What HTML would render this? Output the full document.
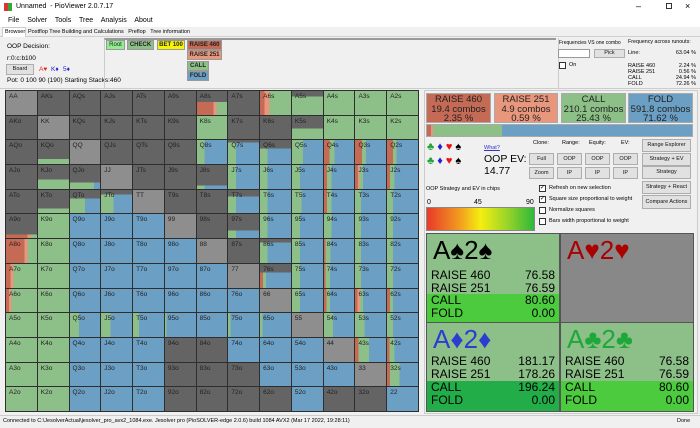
<!DOCTYPE html>
<html><head><meta charset="utf-8">
<style>
*{box-sizing:border-box;margin:0;padding:0;white-space:nowrap}
body{width:700px;height:428px;overflow:hidden;background:#f0f0f0;font-family:"Liberation Sans",sans-serif;font-size:6.5px;color:#000;position:relative}
.a{position:absolute}
:root{--R:#c46a55;--S:#e8967c;--G:#8dbf88;--B:#6b9fc4;--D:#646464}
#grid{position:absolute;left:5px;top:90px;width:414px;height:322px;background:#2e2e2e;border:1px solid #2e2e2e;display:grid;grid-template-columns:repeat(13,1fr);grid-template-rows:repeat(13,1fr);gap:1px}
#grid div{font-size:6.5px;color:#222;padding:2px 0 0 3px;overflow:hidden}
.d{background:var(--D)}.p{background:#8e8e8e}.g{background:var(--G)}.b{background:var(--B)}
.btn{position:absolute;background:#e1e1e1;border:1px solid #adadad;font-size:5.5px;text-align:center;color:#111;overflow:hidden}
.act{position:absolute;font-size:9.5px;text-align:center;line-height:9.5px;padding-top:1px;color:#222;border:1px solid #aaa}
.node{position:absolute;font-size:6px;font-weight:bold;text-align:center;line-height:8px;border:1px solid #999;color:#222;overflow:hidden}
.q{position:absolute;width:134px;height:90px;border:1px solid #555}
.q .c{position:absolute;left:6px;top:1px;font-size:26px;line-height:30px}
.q .r{position:absolute;left:0;width:132px;height:13px;font-size:12px;line-height:13px;padding:0 4px}
.q .r span{float:right}
.cb{position:absolute;width:7px;height:7px;border:1px solid #333;background:#fff;font-size:6px;line-height:5px;text-align:center}
.s{font-size:5.5px}
</style></head><body>
<div class="a" style="left:0;top:0;width:700px;height:14px;background:#fff"></div>
<div class="a" style="left:4px;top:3px;width:8px;height:8px;background:linear-gradient(90deg,#d33 50%,#3a3 0)"></div>
<div class="a" style="left:16px;top:3px;font-size:7px">Unnamed&nbsp; - PioViewer 2.0.7.17</div>
<div class="a" style="left:636px;top:1px;font-size:9px">–</div>
<div class="a" style="left:666px;top:3px;width:6px;height:6px;border:1px solid #333"></div>
<div class="a" style="left:685px;top:1px;font-size:9px">×</div>
<div class="a" style="left:0;top:14px;width:700px;height:13px;background:#fff"></div>
<div class="a" style="left:8px;top:17px;font-size:7px;word-spacing:6px">File Solver Tools Tree Analysis About</div>
<div class="a" style="left:0;top:36px;width:700px;height:1px;background:#d0d0d0"></div>
<div class="a s" style="left:2px;top:27px;width:24px;height:10px;background:#fff;border:1px solid #ccc;border-bottom:none;padding:1px 2px">Browser</div>
<div class="a s" style="left:28px;top:29px">Postflop Tree Building and Calculations&nbsp;&nbsp; Preflop&nbsp;&nbsp; Tree information</div>
<div class="a" style="left:7px;top:43px">OOP Decision:</div>
<div class="a" style="left:7px;top:55px">r:0:c:b100</div>
<div class="btn" style="left:6px;top:64px;width:28px;height:11px;line-height:9px">Board</div>
<div class="a" style="left:39px;top:66px;color:#e22">A♥</div>
<div class="a" style="left:51px;top:66px;color:#22c">K♦</div>
<div class="a" style="left:63px;top:66px;color:#22c">5♦</div>
<div class="a" style="left:7px;top:77px">Pot: 0 100 90 (190) Starting Stacks:460</div>
<div class="a" style="left:104px;top:38px;width:452px;height:51px;border-top:2px solid #999;border-left:1px solid #ccc"></div>
<div class="node" style="left:106px;top:40px;width:19px;background:#90ee90;font-weight:normal">Root</div>
<div class="node" style="left:127px;top:40px;width:27px;background:#8dbf88">CHECK</div>
<div class="node" style="left:157px;top:40px;width:28px;background:#f5f500">BET 100</div>
<div class="node" style="left:187px;top:40px;width:35px;background:#c46a55">RAISE 460</div>
<div class="node" style="left:187px;top:50px;width:35px;background:#e8967c">RAISE 251</div>
<div class="node" style="left:187px;top:61px;width:22px;background:#8dbf88">CALL</div>
<div class="node" style="left:187px;top:71px;width:22px;background:#6b9fc4">FOLD</div>
<div class="a" style="left:558px;top:38px;width:142px;height:51px;border-left:1px solid #ccc"></div>
<div class="a" style="left:559px;top:40px;font-size:5px">Frequencies VS one combo</div>
<div class="a" style="left:558px;top:49px;width:32px;height:9px;background:#fff;border:1px solid #999"></div>
<div class="btn" style="left:594px;top:49px;width:31px;height:9px;line-height:7px">Pick</div>
<div class="cb" style="left:559px;top:62px"></div><div class="a s" style="left:569px;top:62px">On</div>
<div class="a" style="left:628px;top:39px;font-size:5.3px">Frequency across runouts:</div>
<div class="a s" style="left:628px;top:50px;width:68px">Line:<span style="float:right">63.04 %</span></div>
<div class="a s" style="left:628px;top:63px;width:68px;line-height:6px">RAISE 460<span style="float:right">2.24 %</span><br>RAISE 251<span style="float:right">0.56 %</span><br>CALL<span style="float:right">24.94 %</span><br>FOLD<span style="float:right">72.26 %</span></div>
<div class="a" style="left:0;top:88px;width:700px;height:1px;background:#ccc"></div>

<div id="grid">
<div class="p">AA</div><div class="d">AKs</div><div class="d">AQs</div><div class="d">AJs</div><div class="d">ATs</div><div class="d">A9s</div>
<div style="background:linear-gradient(var(--D) 45%,transparent 0),linear-gradient(90deg,var(--R) 55%,var(--S) 0 65%,var(--G) 0)">A8s</div>
<div class="d">A7s</div>
<div style="background:linear-gradient(90deg,var(--R) 15%,var(--S) 0 30%,var(--G) 0)">A6s</div>
<div style="background:linear-gradient(var(--D) 22%,var(--G) 0)">A5s</div><div class="g">A4s</div><div class="g">A3s</div><div class="g">A2s</div>

<div class="d">AKo</div><div class="p">KK</div><div class="d">KQs</div><div class="d">KJs</div><div class="d">KTs</div><div class="d">K9s</div><div class="g">K8s</div><div class="d">K7s</div><div class="d">K6s</div>
<div style="background:linear-gradient(var(--D) 55%,var(--G) 0)">K5s</div><div class="g">K4s</div><div class="g">K3s</div><div class="g">K2s</div>

<div class="d">AQo</div><div style="background:linear-gradient(var(--D) 80%,var(--G) 0)">KQo</div><div class="p">QQ</div><div class="d">QJs</div><div class="d">QTs</div><div class="d">Q9s</div>
<div style="background:linear-gradient(90deg,var(--G) 25%,var(--B) 0)">Q8s</div>
<div style="background:linear-gradient(var(--D) 10%,transparent 0),linear-gradient(90deg,var(--G) 25%,var(--B) 0)">Q7s</div>
<div style="background:linear-gradient(var(--D) 35%,transparent 0),linear-gradient(90deg,var(--G) 25%,var(--B) 0)">Q6s</div>
<div style="background:linear-gradient(90deg,var(--G) 35%,var(--B) 0)">Q5s</div>
<div style="background:linear-gradient(90deg,var(--R) 18%,var(--G) 0 35%,var(--B) 0)">Q4s</div>
<div style="background:linear-gradient(90deg,var(--R) 22%,var(--G) 0 35%,var(--B) 0)">Q3s</div>
<div style="background:linear-gradient(90deg,var(--R) 20%,var(--G) 0 30%,var(--B) 0)">Q2s</div>

<div class="d">AJo</div><div style="background:linear-gradient(var(--D) 60%,var(--G) 0)">KJo</div>
<div style="background:linear-gradient(var(--D) 72%,transparent 0),linear-gradient(90deg,var(--G) 80%,var(--B) 0)">QJo</div>
<div class="p">JJ</div><div class="d">JTs</div><div class="d">J9s</div>
<div style="background:linear-gradient(var(--D) 85%,transparent 0),linear-gradient(90deg,var(--G) 25%,var(--B) 0)">J8s</div>
<div style="background:linear-gradient(90deg,var(--G) 25%,var(--B) 0)">J7s</div>
<div style="background:linear-gradient(90deg,var(--G) 25%,var(--B) 0)">J6s</div>
<div style="background:linear-gradient(90deg,var(--G) 25%,var(--B) 0)">J5s</div>
<div style="background:linear-gradient(90deg,var(--R) 10%,var(--G) 0 25%,var(--B) 0)">J4s</div>
<div style="background:linear-gradient(90deg,var(--R) 10%,var(--S) 0 15%,var(--G) 0 25%,var(--B) 0)">J3s</div>
<div style="background:linear-gradient(90deg,var(--R) 10%,var(--G) 0 25%,var(--B) 0)">J2s</div>

<div class="d">ATo</div><div style="background:linear-gradient(var(--D) 80%,var(--G) 0)">KTo</div>
<div style="background:linear-gradient(var(--D) 38%,transparent 0),linear-gradient(90deg,var(--G) 50%,var(--B) 0)">QTo</div>
<div style="background:linear-gradient(var(--D) 20%,transparent 0),linear-gradient(90deg,var(--G) 40%,var(--B) 0)">JTo</div>
<div class="p">TT</div><div class="d">T9s</div><div class="d">T8s</div>
<div style="background:linear-gradient(var(--D) 28%,transparent 0),linear-gradient(90deg,var(--G) 25%,var(--B) 0)">T7s</div>
<div style="background:linear-gradient(90deg,var(--G) 25%,var(--B) 0)">T6s</div>
<div style="background:linear-gradient(90deg,var(--G) 30%,var(--B) 0)">T5s</div>
<div style="background:linear-gradient(90deg,var(--R) 10%,var(--G) 0 25%,var(--B) 0)">T4s</div>
<div style="background:linear-gradient(90deg,var(--G) 20%,var(--B) 0)">T3s</div>
<div style="background:linear-gradient(90deg,var(--G) 20%,var(--B) 0)">T2s</div>

<div style="background:linear-gradient(var(--D) 85%,transparent 0),linear-gradient(90deg,var(--R) 70%,var(--S) 0 80%,var(--G) 0)">A9o</div>
<div class="g">K9o</div><div class="b">Q9o</div><div class="b">J9o</div><div class="b">T9o</div><div class="p">99</div><div class="d">98s</div>
<div style="background:linear-gradient(var(--D) 68%,transparent 0),linear-gradient(90deg,var(--G) 25%,var(--B) 0)">97s</div>
<div style="background:linear-gradient(90deg,var(--G) 25%,var(--B) 0)">96s</div>
<div style="background:linear-gradient(90deg,var(--G) 25%,var(--B) 0)">95s</div>
<div style="background:linear-gradient(90deg,var(--G) 25%,var(--B) 0)">94s</div>
<div style="background:linear-gradient(90deg,var(--G) 20%,var(--B) 0)">93s</div>
<div style="background:linear-gradient(90deg,var(--G) 20%,var(--B) 0)">92s</div>

<div style="background:linear-gradient(90deg,var(--R) 60%,var(--S) 0 70%,var(--G) 0)">A8o</div>
<div class="g">K8o</div><div class="b">Q8o</div><div class="b">J8o</div><div class="b">T8o</div><div class="b">98o</div><div class="p">88</div><div class="d">87s</div>
<div style="background:linear-gradient(var(--D) 15%,transparent 0),linear-gradient(90deg,var(--G) 25%,var(--B) 0)">86s</div>
<div style="background:linear-gradient(90deg,var(--G) 25%,var(--B) 0)">85s</div>
<div style="background:linear-gradient(90deg,var(--R) 5%,var(--G) 0 22%,var(--B) 0)">84s</div>
<div style="background:linear-gradient(90deg,var(--G) 20%,var(--B) 0)">83s</div>
<div style="background:linear-gradient(90deg,var(--G) 20%,var(--B) 0)">82s</div>

<div style="background:linear-gradient(90deg,var(--R) 15%,var(--S) 0 25%,var(--G) 0)">A7o</div>
<div class="g">K7o</div><div class="b">Q7o</div><div class="b">J7o</div><div class="b">T7o</div><div class="b">97o</div><div class="b">87o</div><div class="p">77</div>
<div style="background:linear-gradient(var(--D) 35%,transparent 0),linear-gradient(90deg,var(--R) 10%,var(--G) 0 20%,var(--B) 0)">76s</div>
<div style="background:linear-gradient(90deg,var(--G) 25%,var(--B) 0)">75s</div>
<div style="background:linear-gradient(90deg,var(--R) 5%,var(--G) 0 20%,var(--B) 0)">74s</div>
<div style="background:linear-gradient(90deg,var(--G) 20%,var(--B) 0)">73s</div>
<div style="background:linear-gradient(90deg,var(--G) 20%,var(--B) 0)">72s</div>

<div style="background:linear-gradient(90deg,var(--R) 10%,var(--S) 0 18%,var(--G) 0)">A6o</div>
<div class="g">K6o</div><div class="b">Q6o</div><div class="b">J6o</div><div class="b">T6o</div><div class="b">96o</div><div class="b">86o</div><div class="b">76o</div><div class="p">66</div>
<div style="background:linear-gradient(90deg,var(--G) 25%,var(--B) 0)">65s</div>
<div style="background:linear-gradient(90deg,var(--R) 8%,var(--G) 0 20%,var(--B) 0)">64s</div>
<div style="background:linear-gradient(90deg,var(--R) 8%,var(--S) 0 16%,var(--G) 0 26%,var(--B) 0)">63s</div>
<div style="background:linear-gradient(90deg,var(--R) 10%,var(--G) 0 20%,var(--B) 0)">62s</div>

<div class="g">A5o</div><div class="g">K5o</div>
<div style="background:linear-gradient(90deg,var(--G) 30%,var(--B) 0)">Q5o</div>
<div style="background:linear-gradient(90deg,var(--G) 30%,var(--B) 0)">J5o</div>
<div style="background:linear-gradient(90deg,var(--G) 20%,var(--B) 0)">T5o</div>
<div style="background:linear-gradient(90deg,var(--G) 5%,var(--B) 0)">95o</div>
<div class="b">85o</div>
<div style="background:linear-gradient(90deg,var(--G) 8%,var(--B) 0)">75o</div>
<div style="background:linear-gradient(90deg,var(--G) 8%,var(--B) 0)">65o</div>
<div class="p">55</div>
<div style="background:linear-gradient(90deg,var(--G) 30%,var(--B) 0)">54s</div>
<div style="background:linear-gradient(90deg,var(--G) 30%,var(--B) 0)">53s</div>
<div style="background:linear-gradient(90deg,var(--G) 20%,var(--B) 0)">52s</div>

<div class="g">A4o</div><div class="g">K4o</div><div class="b">Q4o</div><div class="b">J4o</div><div class="b">T4o</div><div class="d">94o</div><div class="d">84o</div><div class="b">74o</div><div class="b">64o</div><div class="b">54o</div><div class="p">44</div>
<div style="background:linear-gradient(90deg,var(--R) 12%,var(--G) 0 45%,var(--B) 0)">43s</div>
<div style="background:linear-gradient(90deg,var(--R) 8%,var(--G) 0 25%,var(--B) 0)">42s</div>

<div class="g">A3o</div><div class="g">K3o</div><div class="b">Q3o</div><div class="b">J3o</div><div class="b">T3o</div><div class="d">93o</div><div class="d">83o</div><div class="d">73o</div><div class="b">63o</div><div class="b">53o</div><div class="b">43o</div><div class="p">33</div>
<div style="background:linear-gradient(90deg,var(--R) 10%,var(--G) 0 40%,var(--B) 0)">32s</div>

<div class="g">A2o</div><div class="g">K2o</div><div class="b">Q2o</div><div class="b">J2o</div><div class="b">T2o</div><div class="d">92o</div><div class="d">82o</div><div class="d">72o</div><div class="d">62o</div><div class="b">52o</div><div class="d">42o</div><div class="d">32o</div><div class="b">22</div>
</div>

<div class="a" style="left:424px;top:90px;width:274px;height:324px;border:1px solid #ccc"></div>
<div class="act" style="left:426px;top:93px;width:65px;height:30px;background:#c46a55">RAISE 460<br>19.4 combos<br>2.35 %</div>
<div class="act" style="left:494px;top:93px;width:64px;height:30px;background:#e8967c">RAISE 251<br>4.9 combos<br>0.59 %</div>
<div class="act" style="left:561px;top:93px;width:65px;height:30px;background:#8dc087">CALL<br>210.1 combos<br>25.43 %</div>
<div class="act" style="left:628px;top:93px;width:65px;height:30px;background:#6b9fc4">FOLD<br>591.8 combos<br>71.62 %</div>
<div class="a" style="left:426px;top:124px;width:267px;height:13px;border:1px solid #aaa;background:linear-gradient(90deg,#c46a55 0 4px,#e8967c 4px 6px,#8dc087 6px 75px,#6b9fc4 75px)"></div>
<div class="a" style="left:427px;top:140px;font-size:11px;letter-spacing:3px;line-height:14px"><span style="color:#22a33a">♣</span><span style="color:#22c">♦</span><span style="color:#e11">♥</span><span>♠</span><br><span style="color:#22a33a">♣</span><span style="color:#22c">♦</span><span style="color:#e11">♥</span><span>♠</span></div>
<div class="a" style="left:484px;top:145px;font-size:5.5px;color:#33c;text-decoration:underline">What?</div>
<div class="a" style="left:484px;top:153px;font-size:10.5px;line-height:12px">OOP EV:<br>14.77</div>
<div class="a s" style="left:533px;top:140px">Clone:</div>
<div class="a s" style="left:562px;top:140px">Range:</div>
<div class="a s" style="left:589px;top:140px">Equity:</div>
<div class="a s" style="left:621px;top:140px">EV:</div>
<div class="btn" style="left:529px;top:153px;width:25px;height:12px;line-height:10px">Full</div>
<div class="btn" style="left:529px;top:167px;width:25px;height:12px;line-height:10px">Zoom</div>
<div class="btn" style="left:557px;top:153px;width:25px;height:12px;line-height:10px">OOP</div>
<div class="btn" style="left:557px;top:167px;width:25px;height:12px;line-height:10px">IP</div>
<div class="btn" style="left:585px;top:153px;width:25px;height:12px;line-height:10px">OOP</div>
<div class="btn" style="left:585px;top:167px;width:25px;height:12px;line-height:10px">IP</div>
<div class="btn" style="left:613px;top:153px;width:25px;height:12px;line-height:10px">OOP</div>
<div class="btn" style="left:613px;top:167px;width:25px;height:12px;line-height:10px">IP</div>
<div class="btn" style="left:642px;top:139px;width:49px;height:13px;line-height:11px">Range Explorer</div>
<div class="btn" style="left:642px;top:153px;width:49px;height:13px;line-height:11px">Strategy + EV</div>
<div class="btn" style="left:642px;top:166px;width:49px;height:13px;line-height:11px">Strategy</div>
<div class="btn" style="left:642px;top:181px;width:49px;height:13px;line-height:11px">Strategy + React</div>
<div class="btn" style="left:642px;top:195px;width:49px;height:14px;line-height:12px">Compare Actions</div>
<div class="cb" style="left:539px;top:185px">✓</div><div class="a s" style="left:549px;top:185px">Refresh on new selection</div>
<div class="cb" style="left:539px;top:196px">✓</div><div class="a s" style="left:549px;top:196px">Square size proportional to weight</div>
<div class="cb" style="left:539px;top:207px"></div><div class="a s" style="left:549px;top:207px">Normalize squares</div>
<div class="cb" style="left:539px;top:218px"></div><div class="a s" style="left:549px;top:218px">Bars width proportional to weight</div>
<div class="a s" style="left:426px;top:186px">OOP Strategy and EV in chips</div>
<div class="a" style="left:427px;top:199px;font-size:7px">0</div>
<div class="a" style="left:474px;top:199px;font-size:7px">45</div>
<div class="a" style="left:526px;top:199px;font-size:7px">90</div>
<div class="a" style="left:426px;top:207px;width:109px;height:24px;border:1px solid #888;background:linear-gradient(90deg,#e83a2a,#f29a20 30%,#f5ee10 50%,#9ad42a 75%,#2eb83a)"></div>

<div class="q" style="left:426px;top:233px;background:#8dbf88">
<div class="c">A♠2♠</div>
<div class="r" style="top:35px">RAISE 460<span>76.58</span></div>
<div class="r" style="top:48px">RAISE 251<span>76.59</span></div>
<div class="r" style="top:60px;background:#4ccb3f;height:28px;white-space:normal">CALL<span>80.60</span><br>FOLD<span>0.00</span></div>
</div>
<div class="q" style="left:560px;top:233px;background:#888">
<div class="c" style="color:#a00">A♥2♥</div>
</div>
<div class="q" style="left:426px;top:322px;background:#8dbf88">
<div class="c" style="color:#2a3fd0">A♦2♦</div>
<div class="r" style="top:32px">RAISE 460<span>181.17</span></div>
<div class="r" style="top:45px">RAISE 251<span>178.26</span></div>
<div class="r" style="top:58px;background:#22ad48;height:30px;white-space:normal">CALL<span>196.24</span><br>FOLD<span>0.00</span></div>
</div>
<div class="q" style="left:560px;top:322px;background:#8dbf88">
<div class="c" style="color:#1fa83a">A♣2♣</div>
<div class="r" style="top:32px">RAISE 460<span>76.58</span></div>
<div class="r" style="top:45px">RAISE 251<span>76.59</span></div>
<div class="r" style="top:58px;background:#4ccb3f;height:30px;white-space:normal">CALL<span>80.60</span><br>FOLD<span>0.00</span></div>
</div>

<div class="a" style="left:0;top:415px;width:700px;height:1px;background:#ccc"></div>
<div class="a" style="left:3px;top:418px;font-size:5.5px">Connected to C:\JesolverActual\jesolver_pro_avx2_1084.exe. Jesolver pro (PioSOLVER-edge 2.0.6) build 1084 AVX2 (Mar 17 2022, 19:28:11)</div>
<div class="a" style="left:677px;top:418px;font-size:5.5px">Done</div>
</body></html>
